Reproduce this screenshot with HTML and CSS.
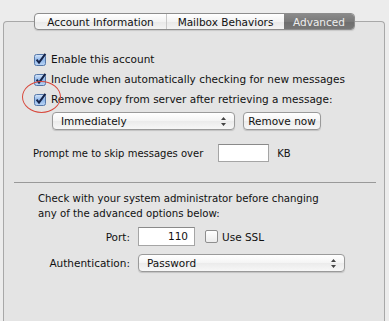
FILE: index.html
```html
<!DOCTYPE html>
<html lang="en">
<head>
  <meta charset="UTF-8">
  <title>Account Preferences - Advanced</title>
  <link rel="stylesheet" href="styles.css">
</head>
<body>

  <div class="tabs">
    <div class="tab">Account Information</div>
    <div class="tab tab-divided">Mailbox Behaviors</div>
    <div class="tab tab-selected">Advanced</div>
  </div>

  <div class="panel">

    <div class="options">
      <label class="check-row">
        <svg class="checkbox" width="13" height="13" viewBox="0 0 13 13"><defs><linearGradient id="cb" x1="0" y1="0" x2="0" y2="1"><stop offset="0" stop-color="#d6e6fa"/><stop offset="0.5" stop-color="#8fb6e8"/><stop offset="1" stop-color="#bcd6f6"/></linearGradient></defs><rect x="0.5" y="1.5" width="11" height="11" rx="2" fill="url(#cb)" stroke="#5577a8"/><path d="M2.6 6.6 L5 9.6 L11.4 0.8" fill="none" stroke="#14234a" stroke-width="2"/></svg>
        <span>Enable this account</span>
      </label>
      <label class="check-row">
        <svg class="checkbox" width="13" height="13" viewBox="0 0 13 13"><rect x="0.5" y="1.5" width="11" height="11" rx="2" fill="url(#cb)" stroke="#5577a8"/><path d="M2.6 6.6 L5 9.6 L11.4 0.8" fill="none" stroke="#14234a" stroke-width="2"/></svg>
        <span>Include when automatically checking for new messages</span>
      </label>
      <label class="check-row">
        <svg class="checkbox" width="13" height="13" viewBox="0 0 13 13"><rect x="0.5" y="1.5" width="11" height="11" rx="2" fill="url(#cb)" stroke="#5577a8"/><path d="M2.6 6.6 L5 9.6 L11.4 0.8" fill="none" stroke="#14234a" stroke-width="2"/></svg>
        <span>Remove copy from server after retrieving a message:</span>
        <span class="annotation"></span>
      </label>

      <div class="remove-row">
        <div class="popup popup-when">
          <span>Immediately</span>
          <svg class="arrows" width="5" height="9" viewBox="0 0 5 9"><path d="M2.5 0 L5 3 L0 3 Z M2.5 9 L5 6 L0 6 Z" fill="#444"/></svg>
        </div>
        <div class="button">Remove now</div>
      </div>

      <div class="prompt-row">
        <span>Prompt me to skip messages over</span>
        <span class="field field-size"></span>
        <span>KB</span>
      </div>
    </div>

    <div class="separator"></div>

    <div class="server">
      <p class="warning">Check with your system administrator before changing any of the advanced options below:</p>

      <div class="form-row">
        <span class="form-label">Port:</span>
        <span class="field field-port">110</span>
        <span class="ssl">
          <span class="checkbox-empty"></span>
          <span>Use SSL</span>
        </span>
      </div>

      <div class="form-row">
        <span class="form-label">Authentication:</span>
        <div class="popup popup-auth">
          <span>Password</span>
          <svg class="arrows" width="5" height="9" viewBox="0 0 5 9"><path d="M2.5 0 L5 3 L0 3 Z M2.5 9 L5 6 L0 6 Z" fill="#444"/></svg>
        </div>
      </div>
    </div>

  </div>

</body>
</html>
```

FILE: styles.css
```css
body{
  margin: 0;
  background-color: #ececec;
  font-family: "DejaVu Sans", sans-serif;
  font-size: 10.5px;
  color: #111;
  height: 321px;
  overflow: hidden;
}

.tabs{
  display: flex;
  margin: 13px 0 -9px 34px;
  position: relative;
  z-index: 1;
  width: 321px;
  height: 17px;
  border: 1px solid #8d8d8d;
  border-radius: 4px;
  box-sizing: border-box;
  overflow: hidden;
  background: linear-gradient(#ffffff, #f3f3f3 50%, #e8e8e8 51%, #f4f4f4);
  box-shadow: 0 1px 1px rgba(0, 0, 0, 0.12);
}

.tab{
  display: flex;
  align-items: center;
  justify-content: center;
  height: 100%;
}

.tab:nth-child(1){
  width: 131px;
}

.tab:nth-child(2){
  width: 117px;
}

.tab-divided{
  border-left: 1px solid #c8c8c8;
}

.tab-selected{
  flex: 1;
  background: linear-gradient(#8a8a8a, #7a7a7a 50%, #6e6e6e 51%, #777777);
  color: #eeeeee;
}

.panel{
  margin-left: 3px;
  width: 382px;
  height: 300px;
  box-sizing: border-box;
  border: 1px solid #a8a8a8;
  border-bottom: none;
  border-radius: 4px 4px 0 0;
  background-color: #e4e4e4;
}

.options{
  padding: 27px 0 0 30px;
}

.check-row{
  display: flex;
  align-items: center;
  gap: 4px;
  height: 20px;
  position: relative;
}

.checkbox{
  flex: none;
}

.annotation{
  position: absolute;
  left: -12px;
  top: -8px;
  width: 37px;
  height: 30px;
  border: 1px solid #d84a3e;
  border-radius: 50%;
}

.remove-row{
  display: flex;
  gap: 8px;
  margin: 3px 0 0 18px;
}

.popup{
  display: flex;
  align-items: center;
  justify-content: space-between;
  height: 18px;
  box-sizing: border-box;
  padding: 0 8px 0 8px;
  border: 1px solid #9a9a9a;
  border-radius: 4px;
  background: linear-gradient(#ffffff, #f4f4f4 50%, #ebebeb 51%, #f7f7f7);
  box-shadow: 0 1px 1px rgba(0, 0, 0, 0.15);
}

.popup-when{
  width: 183px;
}

.arrows{
  flex: none;
}

.button{
  display: flex;
  align-items: center;
  justify-content: center;
  width: 78px;
  height: 18px;
  box-sizing: border-box;
  border: 1px solid #9a9a9a;
  border-radius: 4px;
  background: linear-gradient(#ffffff, #f4f4f4 50%, #ebebeb 51%, #f7f7f7);
  box-shadow: 0 1px 1px rgba(0, 0, 0, 0.15);
}

.prompt-row{
  display: flex;
  align-items: center;
  gap: 8px;
  margin: 14px 0 0 -1px;
  height: 18px;
  font-size: 10px;
}

.field{
  display: inline-block;
  height: 18px;
  box-sizing: border-box;
  background-color: #ffffff;
  border: 1px solid #a5a5a5;
  border-top-color: #8a8a8a;
}

.field-size{
  width: 51px;
  margin-left: 7px;
}

.separator{
  margin: 20px 0 0 10px;
  width: 362px;
  border-top: 1px solid #999999;
}

.server{
  padding: 8px 0 0 34px;
}

.warning{
  margin: 0;
  width: 296px;
  line-height: 15px;
  font-size: 10.2px;
}

.form-row{
  display: flex;
  align-items: center;
  gap: 8px;
  margin-left: -34px;
}

.form-row + .form-row{
  margin-top: 8px;
}

.warning + .form-row{
  margin-top: 6px;
}

.form-label{
  width: 126px;
  text-align: right;
}

.field-port{
  width: 57px;
  height: 19px;
  padding-right: 6px;
  text-align: right;
  line-height: 17px;
}

.ssl{
  display: flex;
  align-items: center;
  gap: 4px;
  margin-left: 2px;
}

.checkbox-empty{
  width: 11px;
  height: 11px;
  border: 1px solid #8e8e8e;
  border-radius: 2px;
  background: linear-gradient(#ffffff, #ececec);
}

.popup-auth{
  width: 207px;
}
```
